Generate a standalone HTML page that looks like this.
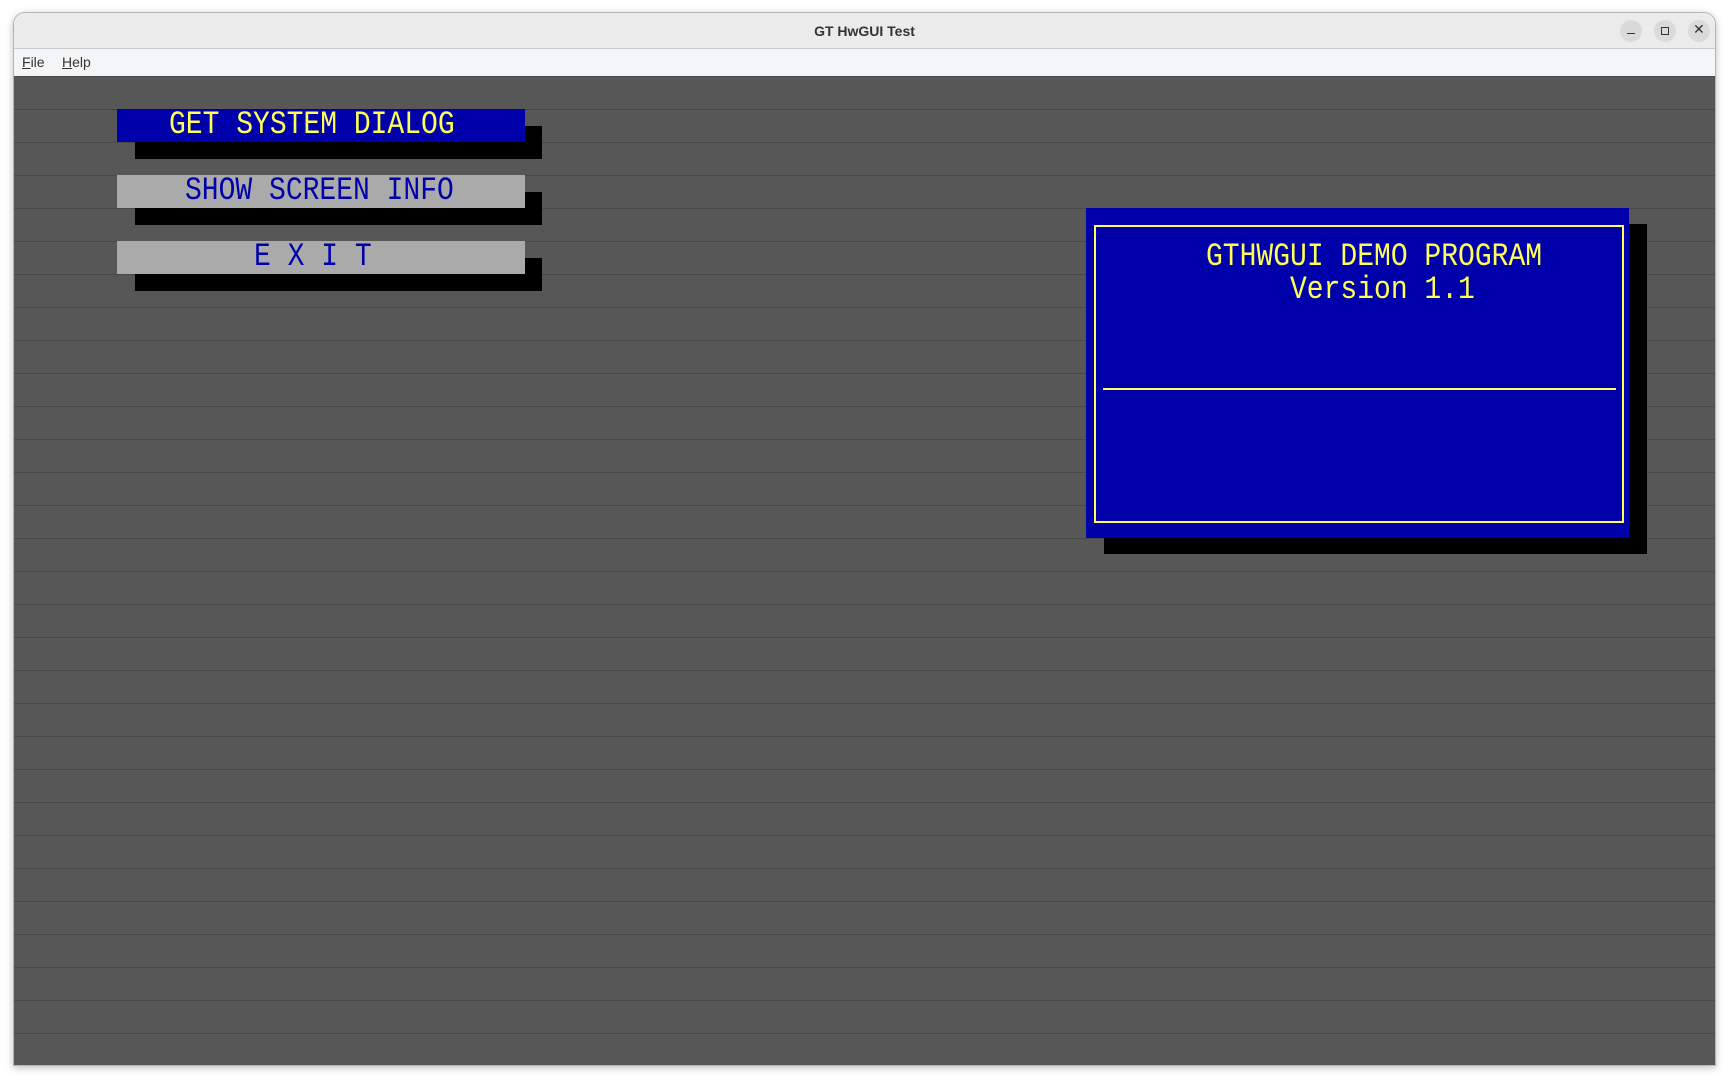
<!DOCTYPE html>
<html><head><meta charset="utf-8"><style>
*{margin:0;padding:0;box-sizing:border-box}
body{width:1730px;height:1082px;background:#fff;position:relative;overflow:hidden;font-family:"Liberation Sans",sans-serif}
.win{position:absolute;left:13px;top:12px;width:1703px;height:1054px;border:1px solid #b5b5b5;border-radius:12px 12px 0 0;overflow:hidden;box-shadow:0 2px 8px rgba(0,0,0,.25)}
.title{position:absolute;left:0;top:0;width:100%;height:36px;background:#ebebeb;border-bottom:1px solid #c8c8c8;text-align:center;font-weight:bold;font-size:14px;line-height:36px;color:#333}
.ctl{position:absolute;top:7px;width:22px;height:22px;border-radius:50%;background:#dadada}
.menu{position:absolute;left:0;top:36px;width:100%;height:27px;background:#f4f5f7;font-size:14px;color:#333}
.menu span{position:absolute;top:5px}
.menu u{text-decoration:underline}
.scr{position:absolute;left:0;top:63px;width:1701px;height:991px;background:#575757;
background-image:repeating-linear-gradient(to bottom,#484848 0,#484848 1px,transparent 1px,transparent 33px)}
.b{position:absolute;height:33px;font-family:"Liberation Mono",monospace;font-size:28px;line-height:33px;white-space:pre}
.b span{position:absolute;top:0;display:inline-block;transform:scaleY(1.15)}
.sh{position:absolute;background:#000}
</style></head><body>
<div class="win">
<div class="title">GT HwGUI Test</div>
<div class="ctl" style="left:1606px"><div style="position:absolute;left:7px;top:13px;width:8px;height:1px;background:#333"></div></div>
<div class="ctl" style="left:1640px"><div style="position:absolute;left:7px;top:7px;width:8px;height:8px;border:1px solid #333"></div></div>
<div class="ctl" style="left:1674px"><div style="position:absolute;left:5px;top:1px;font-size:14px;color:#333">✕</div></div>
<div class="menu"><span style="left:8px"><u>F</u>ile</span><span style="left:48px"><u>H</u>elp</span></div>
<div class="scr">
<div class="sh" style="left:121px;top:50px;width:407px;height:33px"></div>
<div class="b" style="left:103px;top:33px;width:408px;background:#0000aa;color:#ffff55"><span style="left:52px">GET SYSTEM DIALOG</span></div>
<div class="sh" style="left:121px;top:116px;width:407px;height:33px"></div>
<div class="b" style="left:103px;top:99px;width:408px;background:#aaaaaa;color:#0000aa"><span style="left:68px">SHOW SCREEN INFO</span></div>
<div class="sh" style="left:121px;top:182px;width:407px;height:33px"></div>
<div class="b" style="left:103px;top:165px;width:408px;background:#aaaaaa;color:#0000aa"><span style="left:137px">E X I T</span></div>

<div class="sh" style="left:1090px;top:148px;width:543px;height:330px"></div>
<div style="position:absolute;left:1072px;top:132px;width:543px;height:330px;background:#0000aa">
 <div style="position:absolute;left:8px;top:17px;width:530px;height:298px;border:2px solid #ffff55"></div>
 <div style="position:absolute;left:17px;top:180px;width:513px;height:2px;background:#ffff55"></div>
 <div class="b" style="left:0;top:33px;width:543px;color:#ffff55"><span style="left:120px">GTHWGUI DEMO PROGRAM</span></div>
 <div class="b" style="left:0;top:66px;width:543px;color:#ffff55"><span style="left:204px">Version 1.1</span></div>
</div>
</div>
</div>
</body></html>
